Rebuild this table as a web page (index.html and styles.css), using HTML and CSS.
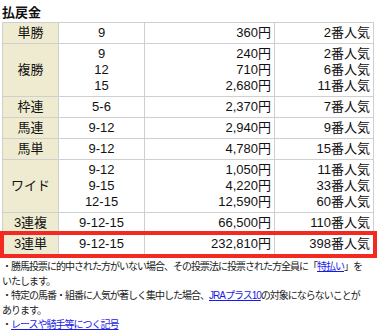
FILE: index.html
```html
<!DOCTYPE html>
<html lang="ja">
<head>
<meta charset="utf-8">
<link rel="stylesheet" href="styles.css">
</head>
<body>
<h2 class="title">払戻金</h2>
<table class="pay">
<colgroup><col class="c1"><col class="c2"><col class="c3"><col class="c4"></colgroup>
<tr class="one"><th>単勝</th><td class="num">9</td><td class="yen">360円</td><td class="pop">2番人気</td></tr>
<tr class="three"><th>複勝</th><td class="num">9<br>12<br>15</td><td class="yen">240円<br>710円<br>2,680円</td><td class="pop">2番人気<br>6番人気<br>11番人気</td></tr>
<tr class="one"><th>枠連</th><td class="num">5-6</td><td class="yen">2,370円</td><td class="pop">7番人気</td></tr>
<tr class="one"><th>馬連</th><td class="num">9-12</td><td class="yen">2,940円</td><td class="pop">9番人気</td></tr>
<tr class="one"><th>馬単</th><td class="num">9-12</td><td class="yen">4,780円</td><td class="pop">15番人気</td></tr>
<tr class="three"><th>ワイド</th><td class="num">9-12<br>9-15<br>12-15</td><td class="yen">1,050円<br>4,220円<br>12,590円</td><td class="pop">11番人気<br>33番人気<br>60番人気</td></tr>
<tr class="one"><th>3連複</th><td class="num">9-12-15</td><td class="yen">66,500円</td><td class="pop">110番人気</td></tr>
<tr class="one hit"><th>3連単</th><td class="num">9-12-15</td><td class="yen">232,810円</td><td class="pop">398番人気</td></tr>
</table>
<ul class="notes">
<li>・勝馬投票に的中された方がいない場合、その投票法に投票された方全員に「<a href="#">特払い</a>」をいたします。</li>
<li>・特定の馬番・組番に人気が著しく集中した場合、<a href="#">JRAプラス10</a>の対象にならないことがあります。</li>
<li>・<a href="#">レースや騎手等につく記号</a></li>
</ul>
</body>
</html>
```
FILE: styles.css
```css
html, body {
  margin: 0;
  padding: 0;
  background: #fff;
}
body {
  padding: 0 2px;
  font-family: "Liberation Sans", "Noto Sans CJK JP", sans-serif;
  color: #111;
}
.title {
  margin: 0;
  padding-top: 5px;
  height: 17px;
  font-size: 13px;
  line-height: 15px;
  font-weight: bold;
}
.pay {
  border-collapse: collapse;
  width: 371px;
  table-layout: fixed;
  font-size: 13px;
  line-height: 16px;
}
.c1 { width: 56px; }
.c2 { width: 86px; }
.c3 { width: 130px; }
.c4 { width: 99px; }
.pay th, .pay td {
  border: 1px solid #cfcfcf;
  padding: 2px 3px;
  vertical-align: middle;
  white-space: nowrap;
}
.pay th {
  background: #eeebd0;
  font-weight: normal;
  text-align: center;
}
.pay .num { text-align: center; }
.pay .yen, .pay .pop { text-align: right; }
.pay .hit {
  outline: 4px solid #f22a22;
  outline-offset: -1px;
}
.notes {
  list-style: none;
  width: 366px;
  margin: 5px 0 0;
  padding: 0;
  font-size: 10px;
  letter-spacing: -1px;
  line-height: 14.5px;
  color: #222;
}
.notes a {
  color: #1a1ae6;
}
```
